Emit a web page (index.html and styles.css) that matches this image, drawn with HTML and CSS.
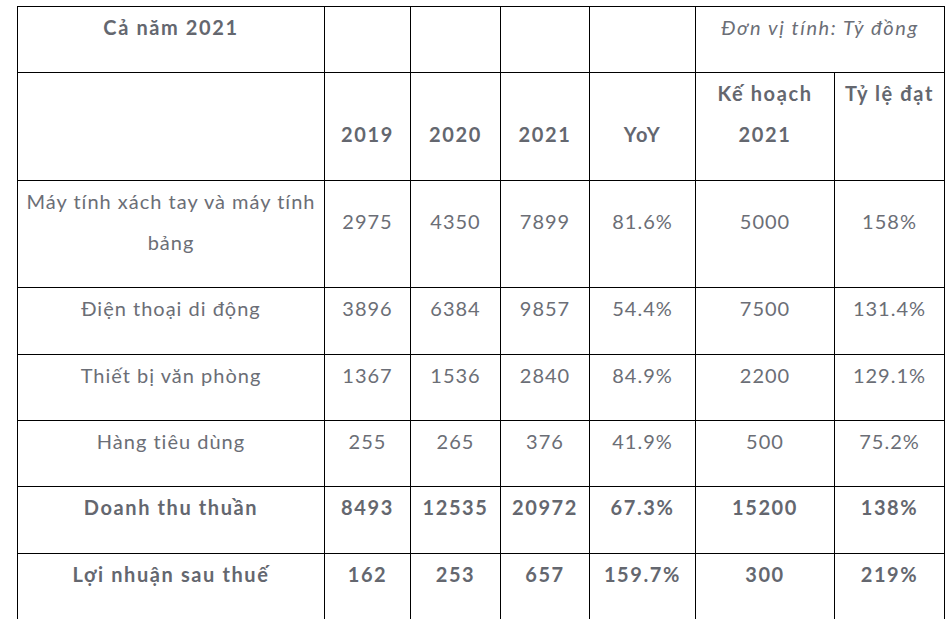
FILE: index.html
```html
<!DOCTYPE html>
<html lang="vi">
<head>
<meta charset="utf-8">
<title>Cả năm 2021</title>
<link rel="stylesheet" href="styles.css">
</head>
<body>
<table class="report">
  <colgroup>
    <col class="c1"><col class="c2"><col class="c3"><col class="c4"><col class="c5"><col class="c6"><col class="c7">
  </colgroup>
  <tr>
    <td class="b">Cả năm 2021</td>
    <td></td><td></td><td></td><td></td>
    <td colspan="2" class="unit">Đơn vị tính: Tỷ đồng</td>
  </tr>
  <tr class="head">
    <td></td>
    <td class="b bottom">2019</td>
    <td class="b bottom">2020</td>
    <td class="b bottom">2021</td>
    <td class="b bottom">YoY</td>
    <td class="b">Kế hoạch 2021</td>
    <td class="b top">Tỷ lệ đạt</td>
  </tr>
  <tr>
    <td>Máy tính xách tay và máy tính bảng</td>
    <td>2975</td><td>4350</td><td>7899</td><td>81.6%</td><td>5000</td><td>158%</td>
  </tr>
  <tr>
    <td>Điện thoại di động</td>
    <td>3896</td><td>6384</td><td>9857</td><td>54.4%</td><td>7500</td><td>131.4%</td>
  </tr>
  <tr>
    <td>Thiết bị văn phòng</td>
    <td>1367</td><td>1536</td><td>2840</td><td>84.9%</td><td>2200</td><td>129.1%</td>
  </tr>
  <tr>
    <td>Hàng tiêu dùng</td>
    <td>255</td><td>265</td><td>376</td><td>41.9%</td><td>500</td><td>75.2%</td>
  </tr>
  <tr class="bold">
    <td>Doanh thu thuần</td>
    <td>8493</td><td>12535</td><td>20972</td><td>67.3%</td><td>15200</td><td>138%</td>
  </tr>
  <tr class="bold">
    <td>Lợi nhuận sau thuế</td>
    <td>162</td><td>253</td><td>657</td><td>159.7%</td><td>300</td><td>219%</td>
  </tr>
</table>
</body>
</html>
```
FILE: styles.css
```css
html, body {
  margin: 0;
  background: #ffffff;
}
body {
  padding: 6px 0 0 17px;
  font-family: Lato, "Noto Sans", sans-serif;
  color: #6b6e76;
}
.report {
  border-collapse: collapse;
  table-layout: fixed;
  width: 927px;
  font-size: 20px;
  line-height: 41px;
}
.c1 { width: 307px; }
.c2 { width: 86px; }
.c3 { width: 90px; }
.c4 { width: 89px; }
.c5 { width: 106px; }
.c6 { width: 139px; }
.c7 { width: 110px; }
.report td {
  border: 1px solid #000000;
  padding: 0 4px 24.4px;
  text-align: center;
  vertical-align: middle;
  letter-spacing: 1px;
}
.report td.b,
.report tr.bold td {
  font-weight: 700;
  color: #64676f;
  letter-spacing: 1.6px;
}
.report td.unit {
  font-style: italic;
  letter-spacing: 1.6px;
}
.report td.bottom { vertical-align: bottom; }
.report td.top { vertical-align: top; }
```
